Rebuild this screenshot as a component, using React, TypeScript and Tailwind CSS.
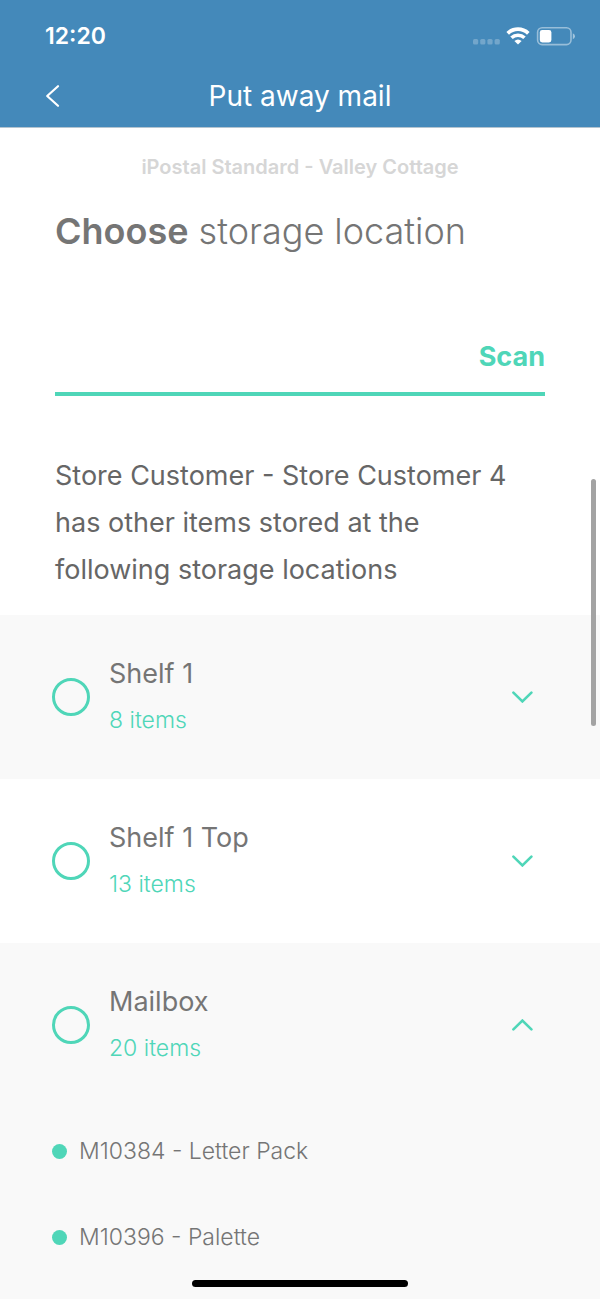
import { useState } from 'react';

interface StorageLocation {
  id: string;
  name: string;
  count: number;
  items: string[];
}

const locations: StorageLocation[] = [
  { id: 'shelf-1', name: 'Shelf 1', count: 8, items: [] },
  { id: 'shelf-1-top', name: 'Shelf 1 Top', count: 13, items: [] },
  {
    id: 'mailbox',
    name: 'Mailbox',
    count: 20,
    items: ['M10384 - Letter Pack', 'M10396 - Palette']
  }
];

function StatusBar() {
  return (
    <div className="flex h-[72px] items-center justify-between pl-[45px] pr-6">
      <span className="text-[23px] font-semibold leading-7">12:20</span>
      <div className="flex items-center">
        <svg className="h-5 w-7" viewBox="0 0 28 20" fill="#fff" fillOpacity="0.25" aria-hidden="true">
          <rect x="1" y="13" width="5.2" height="5.4" rx="1.5" />
          <rect x="8.2" y="13" width="5.2" height="5.4" rx="1.5" />
          <rect x="15.4" y="13" width="5.2" height="5.4" rx="1.5" />
          <rect x="22.6" y="13" width="5.2" height="5.4" rx="1.5" />
        </svg>
        <svg className="ml-1.5 h-5 w-6" viewBox="0 0 24 20" fill="none" aria-hidden="true">
          <path d="M1.7 7.3 A15 15 0 0 1 22.3 7.3" stroke="#fff" strokeWidth="3.8" />
          <path d="M5.5 11.8 A9.4 9.4 0 0 1 18.5 11.8" stroke="#fff" strokeWidth="3.6" />
          <path d="M8.4 15 A5.4 5.4 0 0 1 15.6 15 L12 18.6 Z" fill="#fff" />
        </svg>
        <svg className="ml-1.5 h-5 w-10" viewBox="0 0 40 20" fill="none" aria-hidden="true">
          <rect x="1.6" y="1.8" width="33.4" height="16.8" rx="4.5" stroke="#fff" strokeOpacity="0.45" strokeWidth="1.6" />
          <rect x="3.8" y="4" width="11.6" height="12.4" rx="2.4" fill="#fff" />
          <path d="M36.8 7.2 Q39 8.2 39 10.2 Q39 12.2 36.8 13.2 Z" fill="#fff" fillOpacity="0.5" />
        </svg>
      </div>
    </div>
  );
}

function Chevron({ open }: { open: boolean }) {
  return (
    <svg className="h-3 w-6" viewBox="0 0 24 12" fill="none" stroke="#4fd6b8" strokeWidth="2.6" strokeLinecap="round" aria-hidden="true">
      <path d={open ? 'M3.4 10.4 L12.4 1.6 L21.4 10.4' : 'M3.4 1.6 L12.4 10.4 L21.4 1.6'} />
    </svg>
  );
}

export default function App() {
  const [selected, setSelected] = useState('');
  const [openId, setOpenId] = useState('mailbox');
  const [code, setCode] = useState('');

  return (
    <div className="relative flex min-h-screen flex-col bg-white font-['Inter','Liberation_Sans',sans-serif] text-[#757575]">
      <header className="border-b border-[#b4c4d0] bg-[#4489ba] text-white">
        <StatusBar />
        <div className="grid h-[55px] grid-cols-[1fr_auto_1fr] items-start px-9">
          <button type="button" aria-label="Back" className="flex h-12 w-8 items-center justify-center">
            <svg className="h-6 w-4" viewBox="0 0 16 24" fill="none" stroke="#fff" strokeWidth="2.2" strokeLinecap="round" strokeLinejoin="round" aria-hidden="true">
              <path d="M14 2.2 L3.2 12 L14 21.8" />
            </svg>
          </button>
          <h1 className="text-[28px] leading-[48px]">Put away mail</h1>
        </div>
      </header>

      <main className="flex grow flex-col">
        <div className="px-[55px] pb-[22px] pt-[27px]">
          <p className="text-center text-[20px] font-semibold leading-6 text-[#d6d6d6]">
            iPostal Standard - Valley Cottage
          </p>
          <h2 className="mt-7 text-[36px] font-light leading-[48px]">
            <strong className="font-semibold">Choose</strong> storage location
          </h2>
          <form
            className="mt-[67px] flex h-[74px] items-center border-b-4 border-[#4fd6b8]"
            onSubmit={(e) => e.preventDefault()}
          >
            <input
              type="text"
              aria-label="Storage location"
              value={code}
              onChange={(e) => setCode(e.target.value)}
              className="h-12 min-w-0 grow bg-transparent text-[27px] outline-none"
            />
            <button type="submit" className="text-[27px] font-bold leading-8 text-[#4fd6b8]">
              Scan
            </button>
          </form>
          <p className="mt-14 pr-8 text-[27px] leading-[47px] text-[#666]">
            Store Customer - Store Customer 4 has other items stored at the following storage locations
          </p>
        </div>

        {locations.map((location) => {
          const open = location.id === openId;
          return (
            <section key={location.id} className="odd:bg-white even:bg-[#f9f9f9] last:grow">
              <div className="flex h-[164px] items-center pl-[52px] pr-[54px]">
                <input
                  type="radio"
                  id={location.id}
                  name="location"
                  checked={selected === location.id}
                  onChange={() => setSelected(location.id)}
                  className="size-[38px] shrink-0 appearance-none rounded-full border-3 border-[#4fd6b8] checked:bg-[#4fd6b8]"
                />
                <label htmlFor={location.id} className="ml-[19px] grow leading-[47px]">
                  <span className="block text-[27px]">{location.name}</span>
                  <span className="block text-[23px] font-light text-[#4fd6b8]">{location.count} items</span>
                </label>
                <button
                  type="button"
                  aria-label={`Show items in ${location.name}`}
                  aria-expanded={open}
                  onClick={() => setOpenId(open ? '' : location.id)}
                  className="flex size-12 items-center justify-center"
                >
                  <Chevron open={open} />
                </button>
              </div>
              {open && (
                <ul className="pb-4 pl-[52px] pr-[54px] pt-px">
                  {location.items.map((item) => (
                    <li key={item} className="flex h-[86px] items-center gap-3 text-[23px] font-light leading-8">
                      <span className="size-[15px] rounded-full bg-[#4fd6b8]" />
                      {item}
                    </li>
                  ))}
                </ul>
              )}
            </section>
          );
        })}
      </main>

      {/* scroll thumb and home indicator float over the page */}
      <div className="absolute right-1 top-[479px] h-[247px] w-[5px] rounded-full bg-[#a3a3a3]" />
      <div className="fixed bottom-3 left-1/2 h-[7px] w-[36%] -translate-x-1/2 rounded-full bg-black" />
    </div>
  );
}
